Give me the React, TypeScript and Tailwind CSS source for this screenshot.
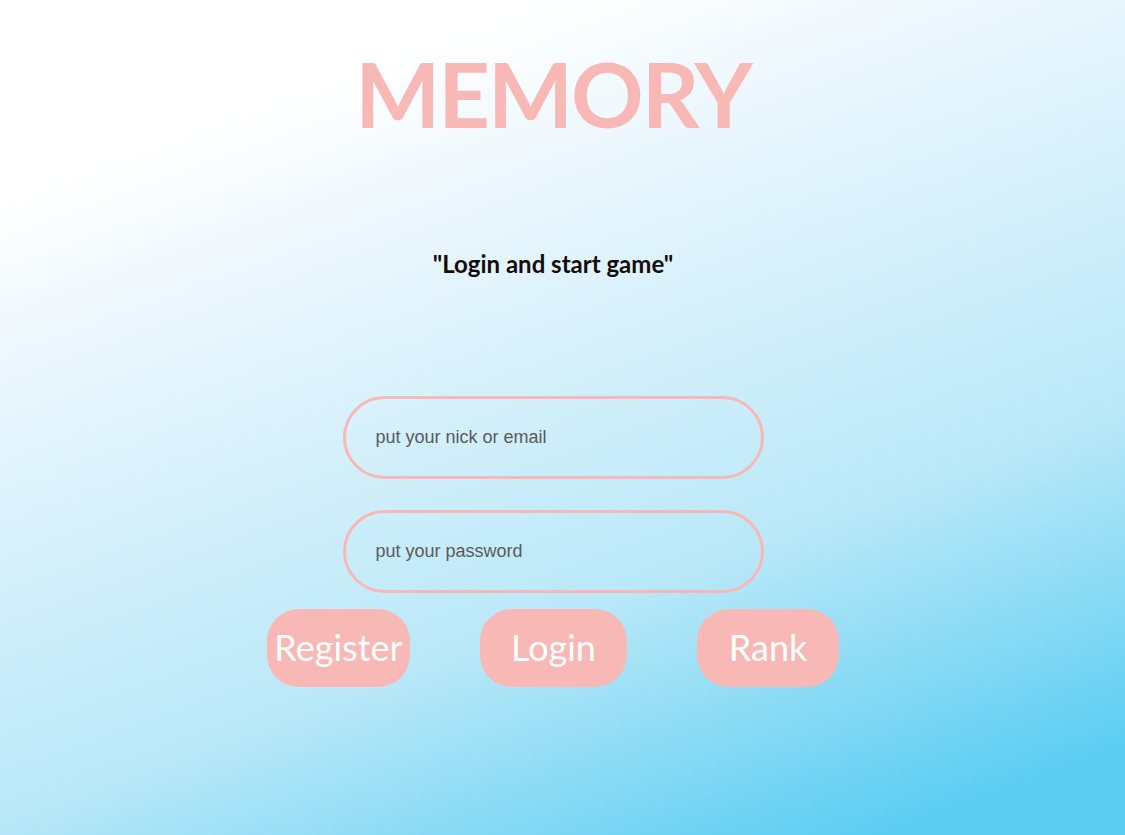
import { useState } from 'react';

const pink = 'bg-[#f8b8b6]';

type Btn = {
  label: string;
  width: string;
};

const buttons: Btn[] = [
  { label: 'Register', width: 'w-[143px]' },
  { label: 'Login', width: 'w-[147px]' },
  { label: 'Rank', width: 'w-[142px]' },
];

export default function App() {
  const [nick, setNick] = useState('');
  const [password, setPassword] = useState('');

  return (
    <div className="h-[835px] w-full overflow-hidden bg-[linear-gradient(160deg,#ffffff_16%,#eaf6fd_31%,#b9e8f8_66%,#5bcdf2_93%)] font-['Lato','Noto_Sans',sans-serif]">
      <div className="flex flex-col items-center pr-[19px]">
        <h1 className="mt-[48px] text-[90px] font-bold leading-none tracking-[-2px] text-[#f8b8b6]">
          MEMORY
        </h1>

        <p className="mt-[114px] text-[24px] font-bold leading-none text-[#160c0c]">
          "Login and start game"
        </p>

        <form
          className="mt-[120px] flex flex-col items-center"
          onSubmit={e => e.preventDefault()}
        >
          <input
            type="text"
            value={nick}
            onChange={e => setNick(e.target.value)}
            placeholder="put your nick or email"
            className="h-[83px] w-[421px] rounded-full border-[3px] border-[#f8b8b6] bg-transparent pl-[30px] font-['Liberation_Sans',Arial,sans-serif] text-[18px] text-[#555] outline-none placeholder:text-[#5a5a5a]"
          />
          <input
            type="password"
            value={password}
            onChange={e => setPassword(e.target.value)}
            placeholder="put your password"
            className="mt-[31px] h-[83px] w-[421px] rounded-full border-[3px] border-[#f8b8b6] bg-transparent pl-[30px] font-['Liberation_Sans',Arial,sans-serif] text-[18px] text-[#555] outline-none placeholder:text-[#5a5a5a]"
          />

          <div className="mt-[16px] flex gap-[70px]">
            {buttons.map(b => (
              <button
                key={b.label}
                type="button"
                className={`${b.width} ${pink} flex h-[78px] items-center justify-center whitespace-nowrap rounded-[32px] pb-[3px] text-[36px] leading-none text-white`}
              >
                {b.label}
              </button>
            ))}
          </div>
        </form>
      </div>
    </div>
  );
}
